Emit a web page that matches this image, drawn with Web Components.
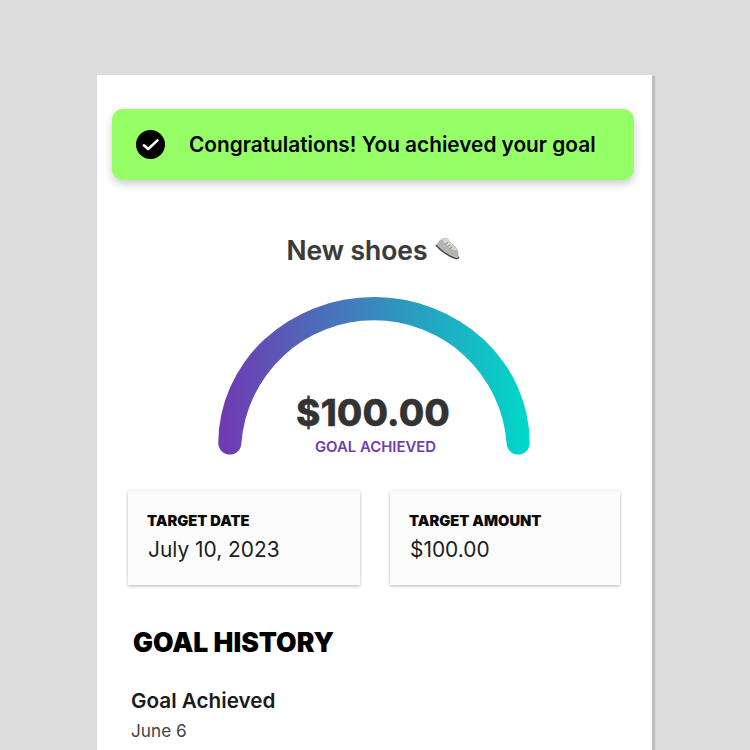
<!DOCTYPE html>
<html><head><meta charset="utf-8">
<style>
html,body{margin:0;height:100%;overflow:hidden;background:#dcdcdc}
body{font-family:Inter,"Liberation Sans",sans-serif;}
</style></head><body>
<goal-page>
  <goal-alert>Congratulations! You achieved your goal</goal-alert>
  <goal-title>New shoes</goal-title>
  <goal-gauge amount="$100.00" label="GOAL ACHIEVED"></goal-gauge>
  <goal-stats>
    <stat-card label="TARGET DATE" value="July 10, 2023"></stat-card>
    <stat-card label="TARGET AMOUNT" value="$100.00"></stat-card>
  </goal-stats>
  <goal-history heading="GOAL HISTORY">
    <history-item title="Goal Achieved" date="June 6"></history-item>
  </goal-history>
</goal-page>
<script>
function def(name, html){
  customElements.define(name, class extends HTMLElement{
    connectedCallback(){
      if(this.shadowRoot) return;
      const a = n => (this.getAttribute(n)||'');
      this.attachShadow({mode:'open'}).innerHTML = html(a);
    }
  });
}
def('goal-page', () => `<style>
:host{display:block;position:relative;box-sizing:border-box;width:555px;height:675px;margin:75px 0 0 97px;background:#fff;box-shadow:3px 1px 1px rgba(0,0,0,.13);padding:34px 18px 0 15px}
</style><slot></slot>`);
def('goal-alert', () => `<style>
:host{display:flex;align-items:center;height:71px;box-sizing:border-box;padding-left:24px;background:#95ff66;border-radius:11px;box-shadow:0 4px 9px rgba(0,0,0,.2);color:#000;font:600 20.8px/1 Inter,sans-serif}
svg{width:29px;height:29px;margin-right:24px;flex:none}
span{padding-top:2px}
</style><svg viewBox="0 0 29 29"><circle cx="14.5" cy="14.5" r="14.5" fill="#000"/><path d="M7.800 15.200l4.400 3.800L21.500 10.400" fill="none" stroke="#fff" stroke-width="2.500" stroke-linecap="round" stroke-linejoin="round"/></svg><span><slot></slot></span>`);
def('goal-title', () => `<style>
:host{display:flex;justify-content:center;align-items:center;margin-top:54px;height:32px;color:#3a3a3a;font:600 26.400px/32px Inter,sans-serif;-webkit-text-stroke:.2px #3a3a3a;padding-left:1px}
svg{width:26px;height:26px;margin-left:7px;margin-top:-3px}
</style><slot></slot><svg viewBox="0 0 28 27"><path d="M3 9C4 6 6 4 8 3l3-1.500c1.500-.5 3 0 4 1l3 4c2 2 4.500 3.500 6 5.500 1.500 2 2.500 5 2.300 8-.1 1.500-1.300 2.500-3 2C16 20 8 15 3 9z" fill="#b4b4b0"/><path d="M9 3.500c3 5 7 9 11 10.500 2 .8 4 .6 5.200.2-1.200-1.500-4.700-3.900-7.200-7.200l-3-4c-1-1-2.500-1.500-4-1z" fill="#d6d6d2"/><path d="M2.500 9.500C8 16 16 21 23 23.500c1.600.5 2.800 0 3.300-1" fill="none" stroke="#4a4a4a" stroke-width="1.800" stroke-linecap="round" stroke-dasharray="2.200 1.300"/><path d="M12 8.500l3-2M14.500 11l3-2M17 13l2.500-2" stroke="#8c8c88" stroke-width="1.100"/></svg>`);
def('goal-gauge', a => `<style>
:host{display:block;position:relative;height:166px;margin-top:31px}
svg{display:block;position:absolute;left:0;top:0;width:522px;height:166px;overflow:visible}
.t{position:absolute;left:0;right:0;text-align:center}
.amt{top:95px;color:#333;font:800 37px/42px Inter,sans-serif;-webkit-text-stroke:.3px #333}
.lbl{top:141px;padding-left:5px;color:#6f3bb3;font:600 14.900px/18px Inter,sans-serif}
</style><svg viewBox="0 0 522 166"><defs><linearGradient id="g" gradientUnits="userSpaceOnUse" x1="106" y1="0" x2="418" y2="0"><stop offset="0" stop-color="#7138b2"/><stop offset="1" stop-color="#00d9c9"/></linearGradient></defs><path d="M106.300 146A155.700 146 0 0 1 417.700 146A11.550 11.550 0 0 1 394.600 146A133 133 0 0 0 129.400 146A11.550 11.550 0 0 1 106.300 146Z" fill="url(#g)"/></svg>
<div class="t amt">${a('amount')}</div><div class="t lbl">${a('label')}</div>`);
def('goal-stats', () => `<style>
:host{display:grid;grid-template-columns:232px 230px;column-gap:30px;margin:28px 0 0 16px}
</style><slot></slot>`);
def('stat-card', a => `<style>
:host{display:block;box-sizing:border-box;height:94px;padding:21px 19px 0;background:#fcfcfc;box-shadow:0 1px 3px rgba(0,0,0,.3)}
.l{color:#0a0a0a;font:900 14.700px/18px Inter,sans-serif}
.v{margin:7px 0 0 1px;color:#1c1c1c;font:400 20.900px/26px Inter,sans-serif}
</style><div class="l">${a('label')}</div><div class="v">${a('value')}</div>`);
def('goal-history', a => `<style>
:host{display:block;margin:41px 0 0 21px}
h2{margin:0;color:#000;font:900 26.500px/32px Inter,sans-serif}
</style><h2>${a('heading')}</h2><slot></slot>`);
def('history-item', a => `<style>
:host{display:block;margin:30px 0 0 -2px}
.t{color:#1a1a1a;font:600 20.700px/26px Inter,sans-serif}
.d{margin-top:6px;color:#444;font:400 17.200px/22px Inter,sans-serif}
</style><div class="t">${a('title')}</div><div class="d">${a('date')}</div>`);
</script>
</body></html>
